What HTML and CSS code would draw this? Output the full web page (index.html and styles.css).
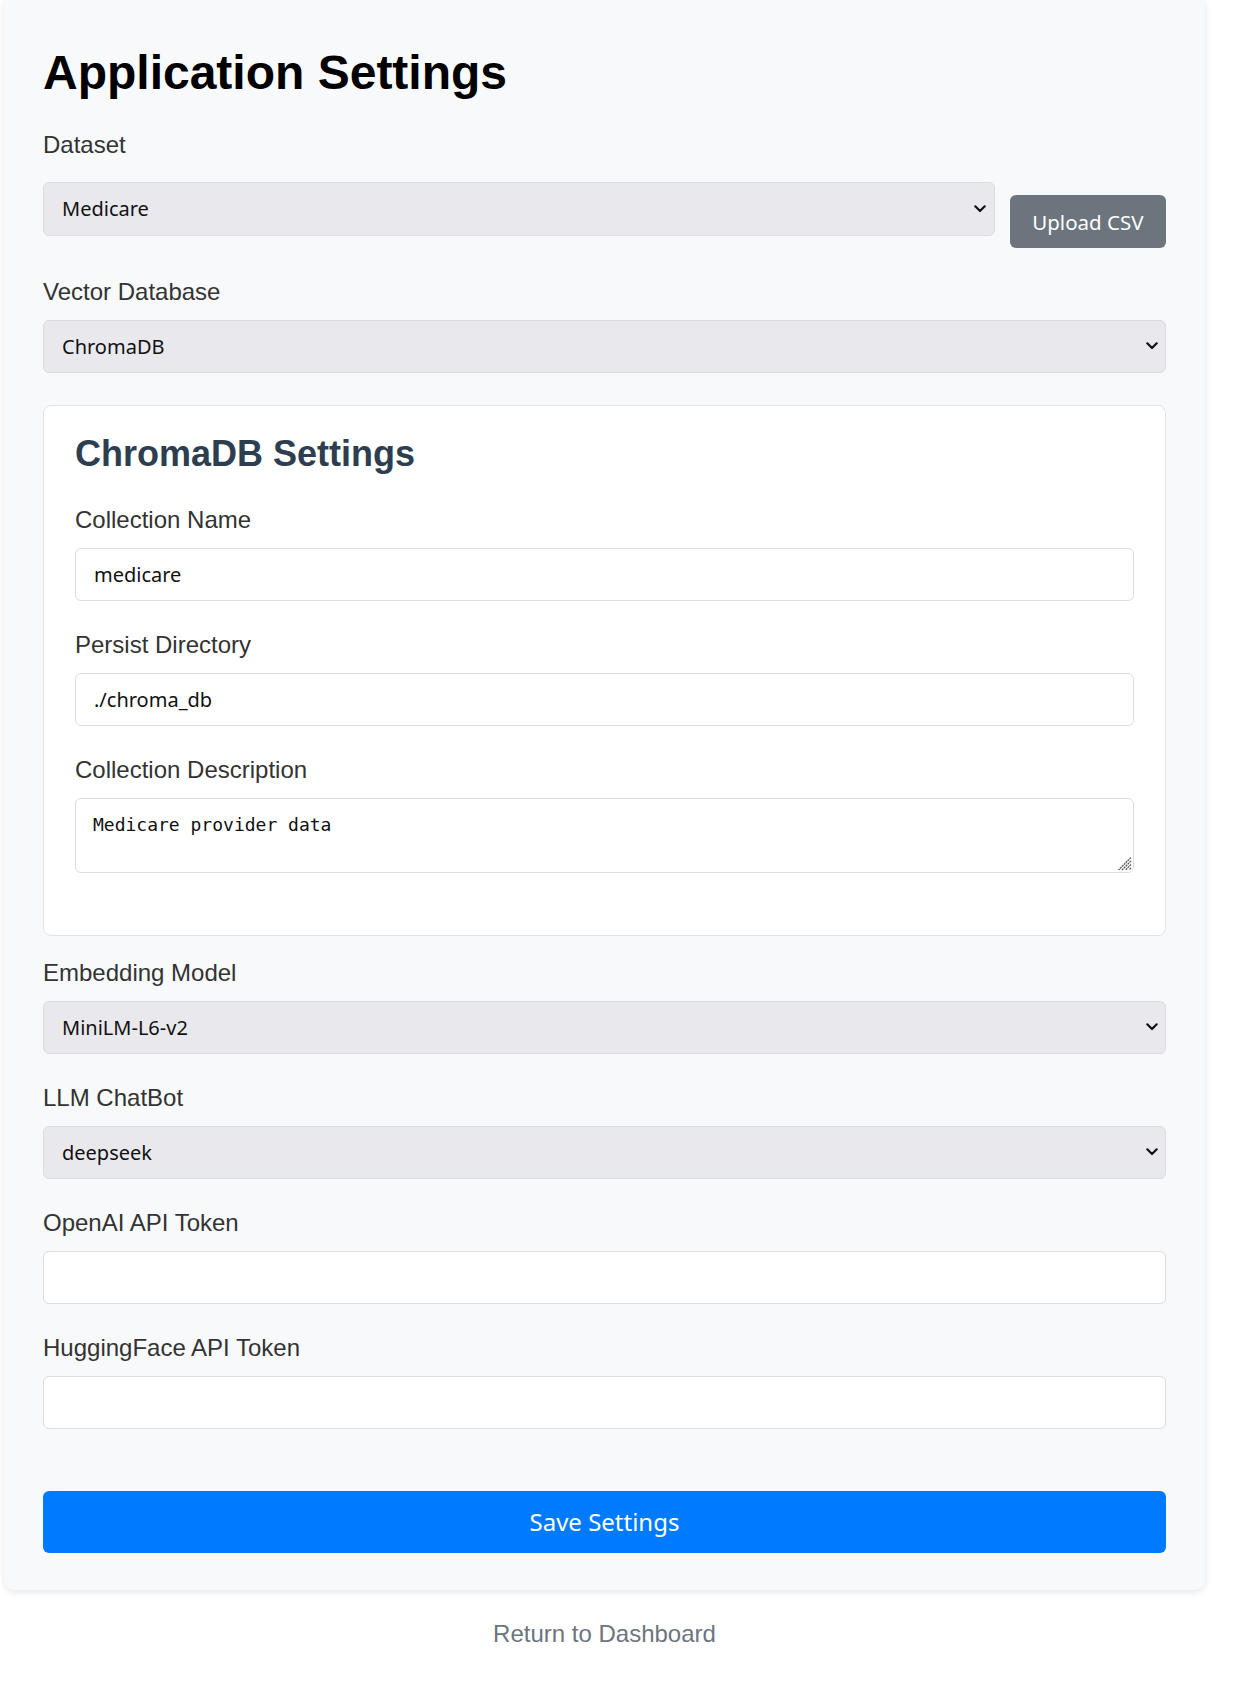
FILE: index.html
```html
<!DOCTYPE html>
<html lang="en">
<head>
<meta charset="utf-8">
<title>Application Settings</title>
<link rel="stylesheet" href="styles.css">
</head>
<body>
<div class="page">
  <div class="container">
    <h1 class="title">Application Settings</h1>

    <div class="group">
      <label class="label label-spaced">Dataset</label>
      <div class="select-row">
        <div class="select-wrap">
          <select class="field select"><option>Medicare</option></select>
          <svg class="chevron" width="12" height="8" viewBox="0 0 12 8"><path d="M1.3 1.3 L6 6 L10.7 1.3" fill="none" stroke="#111" stroke-width="2.2" stroke-linecap="round" stroke-linejoin="round"/></svg>
        </div>
        <button class="btn-secondary">Upload CSV</button>
      </div>
    </div>

    <div class="group">
      <label class="label">Vector Database</label>
      <div class="select-wrap">
        <select class="field select"><option>ChromaDB</option></select>
        <svg class="chevron" width="12" height="8" viewBox="0 0 12 8"><path d="M1.3 1.3 L6 6 L10.7 1.3" fill="none" stroke="#111" stroke-width="2.2" stroke-linecap="round" stroke-linejoin="round"/></svg>
      </div>
    </div>

    <div class="card">
      <h2 class="card-title">ChromaDB Settings</h2>
      <div class="group">
        <label class="label">Collection Name</label>
        <input class="field input" type="text" value="medicare">
      </div>
      <div class="group">
        <label class="label">Persist Directory</label>
        <input class="field input" type="text" value="./chroma_db">
      </div>
      <div class="group">
        <label class="label">Collection Description</label>
        <div class="textarea-wrap">
          <textarea class="textarea">Medicare provider data</textarea>
          <svg class="grip" width="15" height="15" viewBox="0 0 15 15"><g stroke="#555" stroke-width="1.3" stroke-dasharray="2 0.7"><path d="M14 1.5 L1.5 14"/><path d="M14 5 L5 14"/><path d="M14 8.5 L8.5 14"/><path d="M14 12 L12 14"/></g></svg>
        </div>
      </div>
    </div>

    <div class="group">
      <label class="label">Embedding Model</label>
      <div class="select-wrap">
        <select class="field select"><option>MiniLM-L6-v2</option></select>
        <svg class="chevron" width="12" height="8" viewBox="0 0 12 8"><path d="M1.3 1.3 L6 6 L10.7 1.3" fill="none" stroke="#111" stroke-width="2.2" stroke-linecap="round" stroke-linejoin="round"/></svg>
      </div>
    </div>

    <div class="group">
      <label class="label">LLM ChatBot</label>
      <div class="select-wrap">
        <select class="field select"><option>deepseek</option></select>
        <svg class="chevron" width="12" height="8" viewBox="0 0 12 8"><path d="M1.3 1.3 L6 6 L10.7 1.3" fill="none" stroke="#111" stroke-width="2.2" stroke-linecap="round" stroke-linejoin="round"/></svg>
      </div>
    </div>

    <div class="group">
      <label class="label">OpenAI API Token</label>
      <input class="field input" type="password" value="">
    </div>

    <div class="group">
      <label class="label">HuggingFace API Token</label>
      <input class="field input" type="password" value="">
    </div>

    <button class="btn-primary">Save Settings</button>
  </div>
  <div class="back">
    <a class="back-link" href="#">Return to Dashboard</a>
  </div>
</div>
</body>
</html>
```

FILE: styles.css
```css
html, body {
  margin: 0;
  padding: 0;
  background: #ffffff;
}

body {
  font-family: "Liberation Sans", Arial, sans-serif;
}

.page {
  width: 1201px;
  margin-left: 4px;
}

.container {
  box-sizing: border-box;
  width: 1201px;
  background: #f8f9fa;
  border-radius: 0 0 10px 10px;
  box-shadow: 0 2px 6px rgba(0, 0, 0, 0.1);
  padding: 45px 39px 37px 39px;
}

.title {
  margin: 0 0 29.5px 0;
  font-size: 48px;
  line-height: 56px;
  font-weight: 700;
  color: #000;
}

.group {
  margin-bottom: 30px;
}

.label {
  display: block;
  font-size: 24px;
  line-height: 28px;
  color: #333;
  margin-bottom: 13.5px;
}

.label-spaced {
  margin-bottom: 23.5px;
}

.select-row {
  display: flex;
  align-items: flex-start;
  gap: 15px;
}

.select-row .select-wrap {
  flex: 1;
}

.select-wrap {
  position: relative;
}

.field {
  display: block;
  box-sizing: border-box;
  width: 100%;
  margin: 0;
  padding: 12px 18px;
  font-family: "Noto Sans", "Open Sans", sans-serif;
  font-size: 20px;
  line-height: 27.5px;
  color: #111;
  border-radius: 6px;
  outline: none;
}

.select {
  -webkit-appearance: none;
  appearance: none;
  background: #e9e9ed;
  border: 1px solid #dcdce0;
}

.input {
  background: #ffffff;
  border: 1px solid #dddddd;
}

.chevron {
  position: absolute;
  right: 8.5px;
  top: 50%;
  transform: translateY(-50%);
  pointer-events: none;
}

.btn-secondary {
  margin-top: 13px;
  height: 53px;
  padding: 0 22.5px;
  background: #6c757d;
  color: #ffffff;
  border: none;
  border-radius: 6px;
  font-family: "Noto Sans", "Open Sans", sans-serif;
  font-size: 20.5px;
  white-space: nowrap;
}

.card {
  margin: 31.5px 0 23px 0;
  background: #ffffff;
  border: 1px solid #e2e3e5;
  border-radius: 8px;
  padding: 29.5px 31px 2px 31px;
}

.card-title {
  margin: 0 0 33px 0;
  font-size: 36px;
  line-height: 38px;
  font-weight: 700;
  color: #2c3e50;
}

.textarea-wrap {
  position: relative;
  padding-bottom: 30px;
}

.textarea {
  display: block;
  box-sizing: border-box;
  width: 100%;
  height: 75.5px;
  margin: 0;
  padding: 15.5px 17px;
  font-family: "DejaVu Sans Mono", "Liberation Mono", monospace;
  font-size: 18px;
  color: #111;
  background: #ffffff;
  border: 1px solid #dddddd;
  border-radius: 6px;
  resize: none;
  outline: none;
}

.grip {
  position: absolute;
  right: 2px;
  bottom: 32px;
  pointer-events: none;
}

.btn-primary {
  display: block;
  width: 100%;
  height: 62.3px;
  margin-top: 61.5px;
  background: #007bff;
  color: #ffffff;
  border: none;
  border-radius: 6px;
  font-family: "Noto Sans", "Open Sans", sans-serif;
  font-size: 24px;
}

.back {
  text-align: center;
  margin-top: 30.7px;
}

.back-link {
  font-size: 24px;
  line-height: 28px;
  color: #6c757d;
  text-decoration: none;
}
```
